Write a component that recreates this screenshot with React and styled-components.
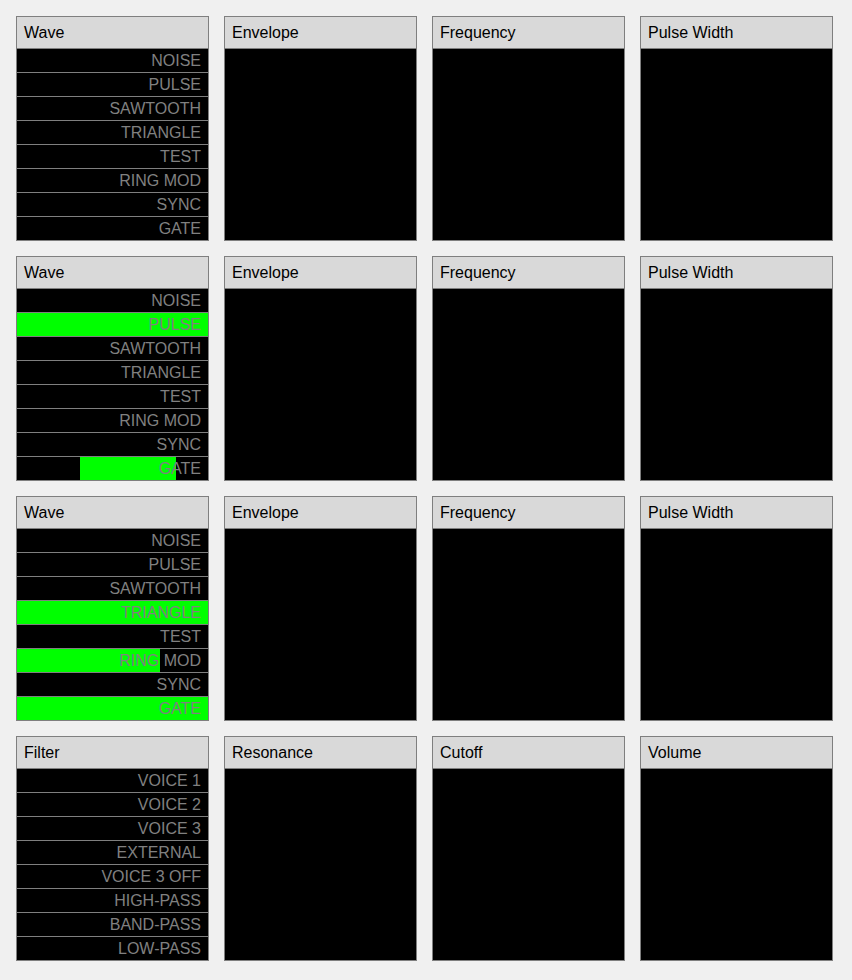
import React from "react";
import styled, { createGlobalStyle } from "styled-components";

const Global = createGlobalStyle`
  html, body { margin: 0; padding: 0; background: #f0f0f0; }
  body { font-family: "Liberation Sans", Arial, sans-serif; }
`;

const Page = styled.div`
  display: grid;
  grid-template-columns: repeat(4, 193px);
  grid-auto-rows: 225px;
  column-gap: 15px;
  row-gap: 15px;
  padding: 16px;
  background: #f0f0f0;
  min-height: 980px;
  box-sizing: border-box;
`;

const Panel = styled.section`
  display: flex;
  flex-direction: column;
  border: 1px solid #7f7f7f;
  background: #000;
  box-sizing: border-box;
  width: 193px;
  height: 225px;
`;

const Header = styled.div`
  height: 31px;
  flex: none;
  background: #d9d9d9;
  border-bottom: 1px solid #7f7f7f;
  color: #000;
  font-size: 16px;
  line-height: 31px;
  padding-left: 7px;
`;

const List = styled.div`
  display: flex;
  flex-direction: column;
  flex: 1;
`;

const Row = styled.div`
  position: relative;
  height: 23px;
  flex: none;
  border-bottom: 1px solid #7f7f7f;
  background: ${(p) => (p.$on ? "#00ff00" : "#000")};
  color: #808080;
  font-size: 16px;
  line-height: 23px;
  text-align: right;
  padding-right: 7px;
  &:last-child { border-bottom: none; }
`;

const Fill = styled.span`
  position: absolute;
  top: 0;
  bottom: 0;
  background: #00ff00;
`;

const Label = styled.span`
  position: relative;
`;

const waveItems = ["NOISE", "PULSE", "SAWTOOTH", "TRIANGLE", "TEST", "RING MOD", "SYNC", "GATE"];
const filterItems = ["VOICE 1", "VOICE 2", "VOICE 3", "EXTERNAL", "VOICE 3 OFF", "HIGH-PASS", "BAND-PASS", "LOW-PASS"];

const rows = [
  { title: "Wave", items: waveItems, state: {}, others: ["Envelope", "Frequency", "Pulse Width"] },
  {
    title: "Wave",
    items: waveItems,
    state: { PULSE: true, GATE: { left: 63, width: 96 } },
    others: ["Envelope", "Frequency", "Pulse Width"],
  },
  {
    title: "Wave",
    items: waveItems,
    state: { TRIANGLE: true, "RING MOD": { left: 0, width: 143 }, GATE: true },
    others: ["Envelope", "Frequency", "Pulse Width"],
  },
  { title: "Filter", items: filterItems, state: {}, others: ["Resonance", "Cutoff", "Volume"] },
];

export default function App() {
  return (
    <>
      <Global />
      <Page>
        {rows.map((r, i) => (
          <React.Fragment key={i}>
            <Panel>
              <Header>{r.title}</Header>
              <List>
                {r.items.map((it) => {
                  const s = r.state[it];
                  return (
                    <Row key={it} $on={s === true}>
                      {s && s !== true && <Fill style={{ left: s.left, width: s.width }} />}
                      <Label>{it}</Label>
                    </Row>
                  );
                })}
              </List>
            </Panel>
            {r.others.map((o) => (
              <Panel key={o}>
                <Header>{o}</Header>
              </Panel>
            ))}
          </React.Fragment>
        ))}
      </Page>
    </>
  );
}
